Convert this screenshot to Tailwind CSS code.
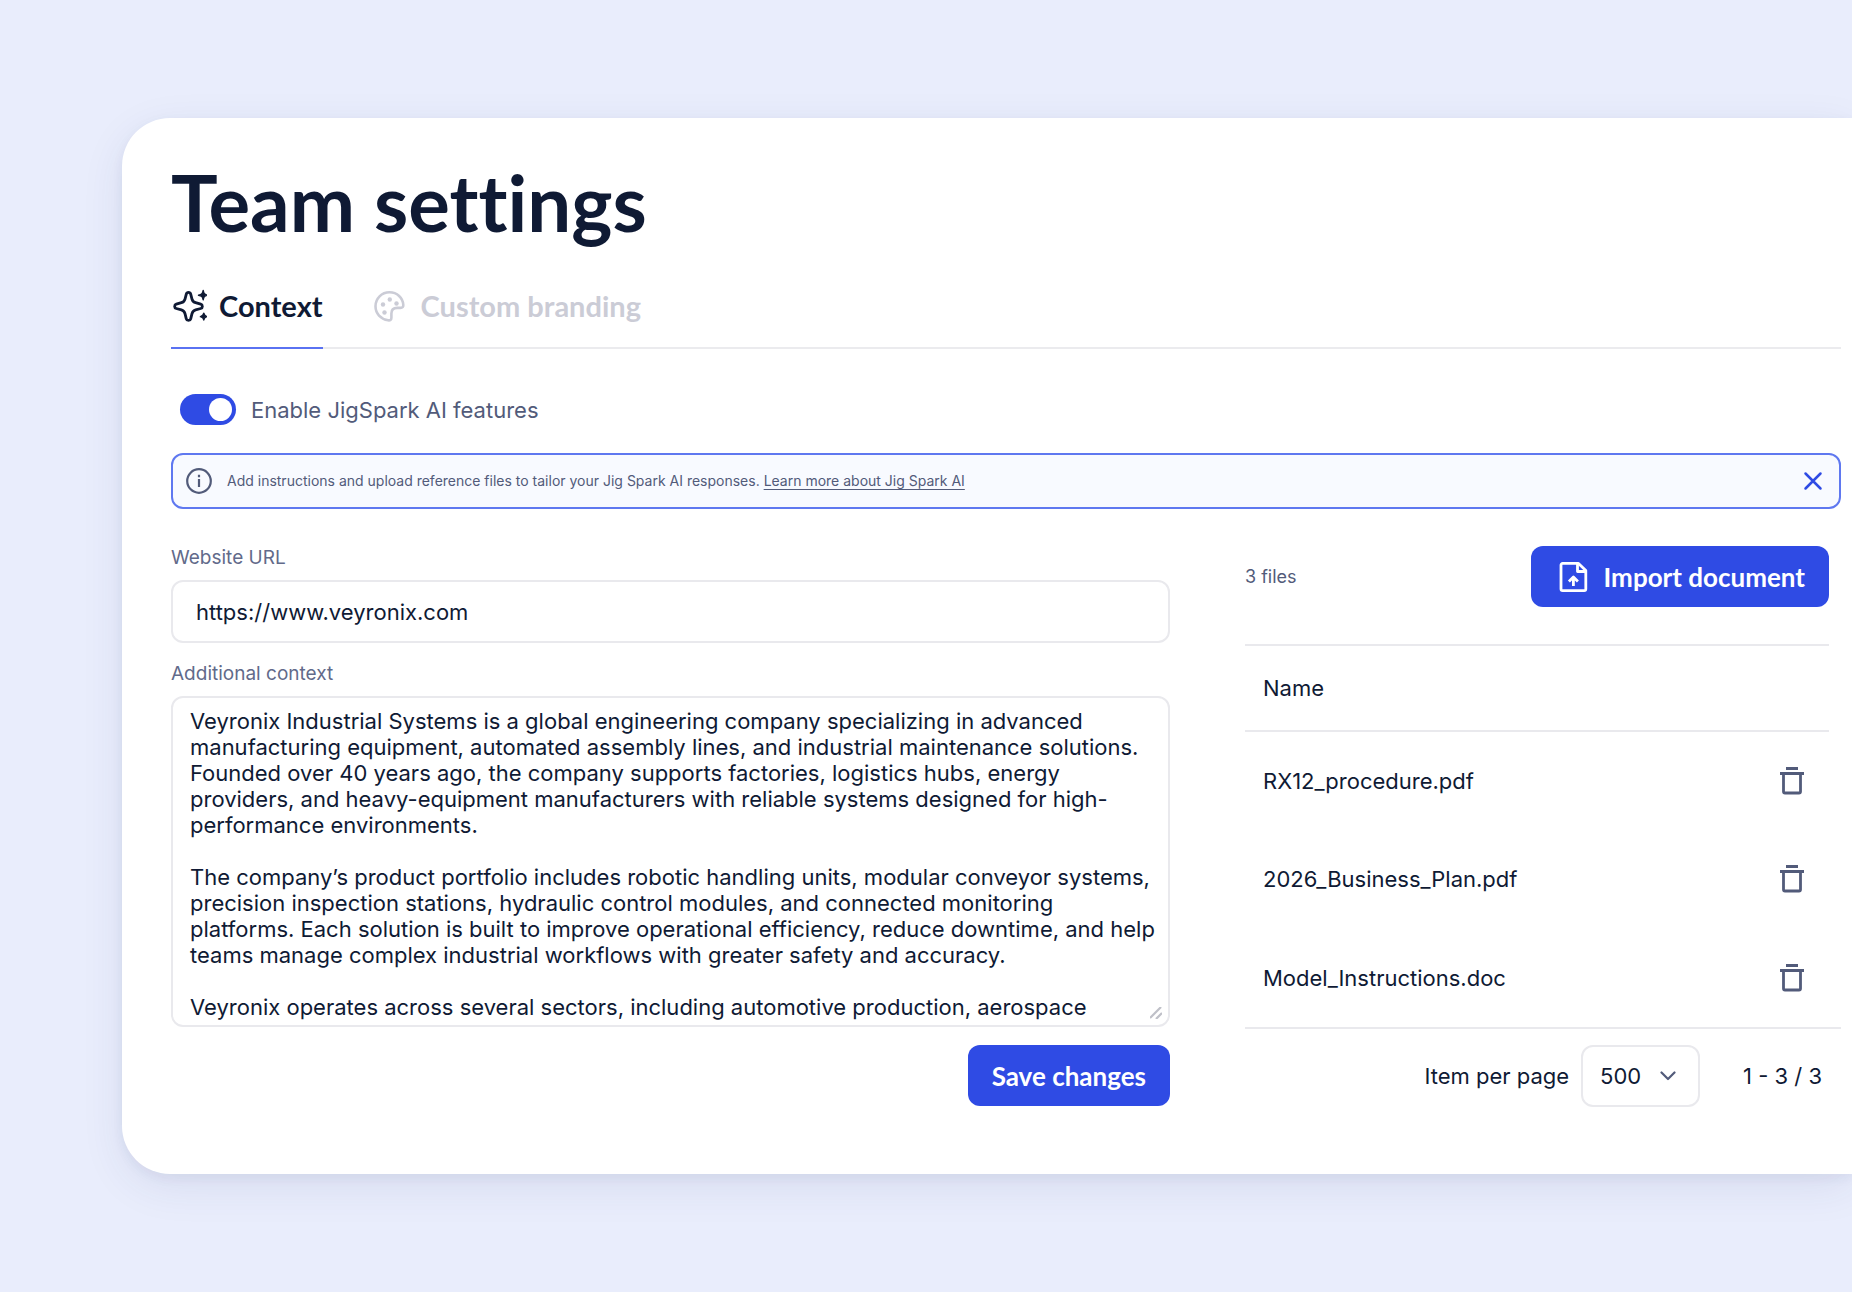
<!DOCTYPE html>
<html lang="en">
<head>
<meta charset="utf-8">
<meta name="viewport" content="width=device-width, initial-scale=1">
<title>Team settings</title>
<script src="https://cdn.jsdelivr.net/npm/@tailwindcss/browser@4"></script>
</head>
<body class="min-h-screen bg-[#e9edfc] py-[118px] pl-[122px] font-['Inter',sans-serif] text-[22px] leading-[26px] text-[#0f1a34]">
<svg class="hidden" aria-hidden="true">
  <symbol id="trash" viewBox="0 0 24 28"><path d="M6 1.500h12M0 6.500h24" fill="none" stroke="currentColor" stroke-width="3"/><path d="M3.500 7v17.500a1.500 1.500 0 0 0 1.500 1.500h14a1.500 1.500 0 0 0 1.500-1.500V7" fill="none" stroke="currentColor" stroke-width="2.800"/></symbol>
</svg>
<main class="rounded-l-[48px] bg-white pt-9 pr-[11px] pb-[67px] pl-[49px] shadow-[0_4px_12px_rgba(40,55,100,0.06),0_12px_44px_rgba(40,55,110,0.09)]">
  <h1 class="font-['Lato',sans-serif] text-[78px] leading-[96px] font-bold [font-variant-ligatures:none]">Team settings</h1>

  <nav class="mt-[22px] flex gap-[50px] border-b-2 border-[#ebebee] font-['Lato',sans-serif] text-[29px] leading-9 font-bold" aria-label="Settings sections">
    <a href="#context" class="-mb-[2px] flex items-center gap-3 border-b-2 border-[#5a72f2] pt-4 pb-[23px]">
      <svg class="size-9" viewBox="-1 0 36 36" fill="none" stroke="currentColor" stroke-width="2.800" stroke-linejoin="round"><path d="M16.500 4.400c1.100 0 1.900.7 2.200 1.800l1.300 4.900c.6 2.100 1.500 3 3.600 3.600l5.100 1.500c2.200.7 2.200 3.700 0 4.300l-5.100 1.400c-2.100.6-3 1.600-3.600 3.700l-1.300 5.200c-.6 2.200-3.800 2.200-4.400 0L13 25.600c-.6-2.100-1.500-3.100-3.600-3.700l-5.100-1.400c-2.200-.6-2.200-3.600 0-4.300l5.100-1.500c2.100-.6 3-1.500 3.600-3.600l1.300-4.900c.3-1.100 1.100-1.800 2.200-1.800z"/><path d="M31.200 2.500c.6 3.300 1.300 4 4.100 4.700-2.800.7-3.500 1.400-4.100 4.700-.7-3.300-1.400-4-4.700-4.700 3.300-.7 4-1.400 4.700-4.700zM31.800 25.200c.4 2.300 1 2.900 3 3.400-2 .5-2.600 1.100-3 3.400-.4-2.300-1-2.900-3.400-3.400 2.400-.5 3-1.100 3.400-3.400z" fill="currentColor" stroke-width="1.400"/></svg>
      <span>Context</span>
    </a>
    <a href="#branding" class="flex items-center gap-4 pt-4 pb-[23px] text-[#cbccd6]">
      <svg class="size-8" viewBox="0 0 32 32" fill="none" stroke="currentColor" stroke-width="2.600" stroke-linejoin="round"><path d="M16.500 2.300C24 2.300 30 7.800 30.300 15c.1 2-.9 2.900-2.800 2.900h-3.300c-4 0-5.800 1.700-5.800 5.600v4.200c0 2.100-1.300 3-3.300 2.600C7.700 29 2.500 23.500 2.500 16.300 2.500 8.500 8.700 2.300 16.500 2.300z"/><g fill="currentColor" stroke="none"><circle cx="10" cy="14.500" r="2.200"/><circle cx="16.800" cy="9.500" r="2.200"/><circle cx="23.500" cy="13.500" r="2.200"/><circle cx="11.500" cy="22.500" r="2.200"/></g></svg>
      <span>Custom branding</span>
    </a>
  </nav>

  <label class="mt-[45px] ml-[9px] flex items-center gap-[15px] text-[#525b7a]">
    <input type="checkbox" checked class="h-[31px] w-[56px] appearance-none rounded-full bg-[#2f4be4] p-[4px] pl-[29px] before:block before:size-[23px] before:rounded-full before:bg-white before:content-['']">
    <span>Enable JigSpark AI features</span>
  </label>

  <div class="mt-7 flex h-[56px] items-center rounded-xl border-2 border-[#5f78f0] bg-[#f8faff] pr-[14px] pl-[13px] text-[14px] leading-5 text-[#525b7a]">
    <svg class="size-[26px]" viewBox="0 0 26 26" fill="none" stroke="currentColor" stroke-width="2.200"><circle cx="13" cy="13" r="11.800"/><path d="M13 11v8M13 6.800v2.400"/></svg>
    <p class="ml-[15px] flex-1">Add instructions and upload reference files to tailor your Jig Spark AI responses. <a href="#learn" class="underline underline-offset-3">Learn more about Jig Spark AI</a></p>
    <button type="button" aria-label="Dismiss" class="text-[#2f4be4]"><svg class="size-6" viewBox="0 0 24 24" fill="none" stroke="currentColor" stroke-width="2.500" stroke-linecap="round"><path d="M4.500 4.500l15 15M19.500 4.500l-15 15"/></svg></button>
  </div>

  <div class="mt-[37px] grid grid-cols-[1fr_596px] gap-x-[75px]">
    <form class="flex flex-col">
      <label for="url" class="text-[19px] leading-6 text-[#626a8a]">Website URL</label>
      <input id="url" type="url" value="https://www.veyronix.com" class="mt-[10px] h-[63px] rounded-xl border-2 border-[#e9e9ed] px-[23px]">
      <label for="ctx" class="mt-[19px] text-[19px] leading-6 text-[#626a8a]">Additional context</label>
      <div class="relative mt-[10px] flex">
        <textarea id="ctx" class="h-[331px] w-full resize-none overflow-hidden rounded-xl border-2 border-[#e9e9ed] pt-[10px] pr-3 pl-[17px]">Veyronix Industrial Systems is a global engineering company specializing in advanced manufacturing equipment, automated assembly lines, and industrial maintenance solutions. Founded over 40 years ago, the company supports factories, logistics hubs, energy providers, and heavy-equipment manufacturers with reliable systems designed for high-performance environments.

The company’s product portfolio includes robotic handling units, modular conveyor systems, precision inspection stations, hydraulic control modules, and connected monitoring platforms. Each solution is built to improve operational efficiency, reduce downtime, and help teams manage complex industrial workflows with greater safety and accuracy.

Veyronix operates across several sectors, including automotive production, aerospace</textarea>
        <svg class="absolute right-2 bottom-2 size-3" viewBox="0 0 12 12" fill="none" stroke="#bfc0c8" stroke-width="2.200"><path d="M0 11L11 0M6 12l6-6"/></svg>
      </div>
      <button type="button" class="mt-[18px] h-[61px] self-end rounded-xl bg-[#2f4be4] px-6 font-['Lato',sans-serif] text-[26px] font-bold text-white">Save changes</button>
    </form>

    <section aria-label="Files" class="flex flex-col">
      <div class="mr-3 flex items-center justify-between">
        <p class="text-[18px] leading-6 text-[#525b7a]">3 files</p>
        <button type="button" class="flex h-[61px] items-center gap-[14px] rounded-xl bg-[#2f4be4] pr-6 pl-[27px] font-['Lato',sans-serif] text-[26px] font-bold text-white">
          <svg class="size-8" viewBox="0 0 32 32" fill="none" stroke="currentColor" stroke-width="2.800" stroke-linejoin="round"><path d="M20.500 2.400H4.600a1.600 1.600 0 0 0-1.600 1.600v24A1.600 1.600 0 0 0 4.600 29.600h21.600a1.600 1.600 0 0 0 1.600-1.600V9.500z"/><path d="M19.500 3v7.500H27"/><path d="M15.400 25v-8M10.900 20.500l4.500-4.500 4.500 4.500"/></svg>
          <span>Import document</span>
        </button>
      </div>
      <div class="mt-[37px] mr-3">
        <table class="w-full text-left">
          <thead>
            <tr class="h-[86px] border-y-2 border-[#e9e9ed]"><th scope="col" class="pl-[18px] font-normal">Name</th><td></td></tr>
          </thead>
          <tbody>
            <tr class="h-[98px]"><td class="pl-[18px]">RX12_procedure.pdf</td><td class="w-[62px]"><button type="button" aria-label="Delete RX12_procedure.pdf" class="flex text-[#525b7a]"><svg class="ml-[13px] h-7 w-6"><use href="#trash"/></svg></button></td></tr>
            <tr class="h-[99px]"><td class="pl-[18px]">2026_Business_Plan.pdf</td><td><button type="button" aria-label="Delete 2026_Business_Plan.pdf" class="flex text-[#525b7a]"><svg class="ml-[13px] h-7 w-6"><use href="#trash"/></svg></button></td></tr>
            <tr class="h-[99px]"><td class="pl-[18px]">Model_Instructions.doc</td><td><button type="button" aria-label="Delete Model_Instructions.doc" class="flex text-[#525b7a]"><svg class="ml-[13px] h-7 w-6"><use href="#trash"/></svg></button></td></tr>
          </tbody>
        </table>
      </div>
      <div class="flex items-center justify-end border-t-2 border-[#e9e9ed] pt-4 pr-[19px]">
        <label for="size">Item per page</label>
        <div class="relative ml-3">
          <select id="size" class="block h-[62px] w-[119px] appearance-none rounded-xl border-2 border-[#e9e9ed] bg-white pl-[17px]"><option>500</option></select>
          <svg class="pointer-events-none absolute top-[23px] right-6 size-4" viewBox="0 0 16 16" fill="none" stroke="#525b7a" stroke-width="2.200" stroke-linecap="round" stroke-linejoin="round"><path d="M1.500 4.500L8 11l6.500-6.500"/></svg>
        </div>
        <p class="ml-[43px]">1 - 3 / 3</p>
      </div>
    </section>
  </div>
</main>
</body>
</html>
